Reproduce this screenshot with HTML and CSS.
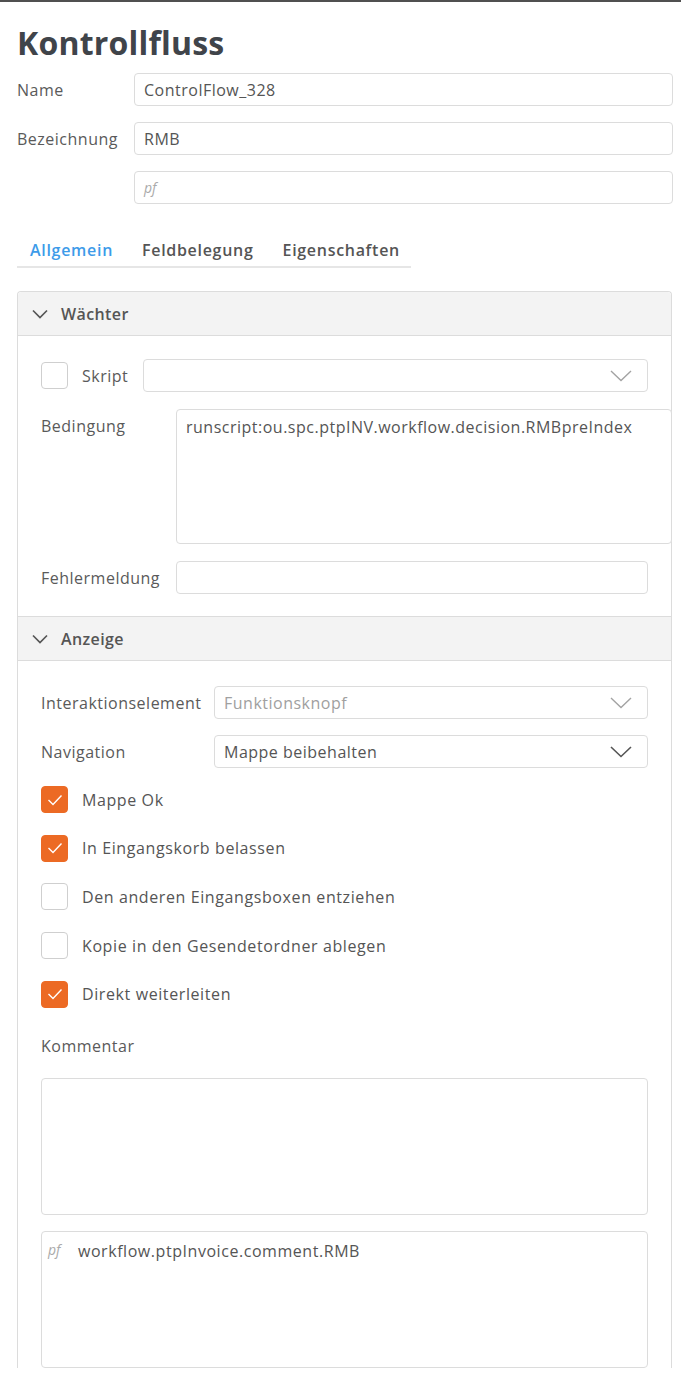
FILE: index.html
```html
<!DOCTYPE html>
<html lang="de">
<head>
<meta charset="utf-8">
<title>Kontrollfluss</title>
<link rel="stylesheet" href="styles.css">
</head>
<body>
<div class="topbar"></div>
<main class="page">
  <h1 class="title">Kontrollfluss</h1>

  <div class="form">
    <div class="form-row">
      <span class="label">Name</span>
      <div class="field">ControlFlow_328</div>
    </div>
    <div class="form-row">
      <span class="label">Bezeichnung</span>
      <div class="field">RMB</div>
    </div>
    <div class="form-row">
      <span class="label"></span>
      <div class="field placeholder">pf</div>
    </div>
  </div>

  <nav class="tabs">
    <span class="tab active">Allgemein</span>
    <span class="tab">Feldbelegung</span>
    <span class="tab">Eigenschaften</span>
  </nav>

  <section class="panel">
    <header class="panel-head">
      <svg class="chev" viewBox="0 0 16 10" width="16" height="10"><path d="M1 1.5 L8 8.5 L15 1.5" fill="none" stroke="#555" stroke-width="1.7"/></svg>
      <span>Wächter</span>
    </header>
    <div class="panel-body guard">
      <div class="row skript-row">
        <span class="cb"></span>
        <span class="label skript-label">Skript</span>
        <div class="field select">
          <span></span>
          <svg class="sel-chev" viewBox="0 0 22 12" width="22" height="12"><path d="M1 1 L11 10.5 L21 1" fill="none" stroke="#a3a3a3" stroke-width="1.4"/></svg>
        </div>
      </div>
      <div class="row grid-a">
        <span class="label top">Bedingung</span>
        <div class="field area wide">runscript:ou.spc.ptpINV.workflow.decision.RMBpreIndex</div>
      </div>
      <div class="row grid-a">
        <span class="label">Fehlermeldung</span>
        <div class="field"></div>
      </div>
    </div>

    <header class="panel-head inner">
      <svg class="chev" viewBox="0 0 16 10" width="16" height="10"><path d="M1 1.5 L8 8.5 L15 1.5" fill="none" stroke="#555" stroke-width="1.7"/></svg>
      <span>Anzeige</span>
    </header>
    <div class="panel-body display">
      <div class="row grid-b">
        <span class="label">Interaktionselement</span>
        <div class="field select disabled">
          <span>Funktionsknopf</span>
          <svg class="sel-chev" viewBox="0 0 22 12" width="22" height="12"><path d="M1 1 L11 10.5 L21 1" fill="none" stroke="#a3a3a3" stroke-width="1.4"/></svg>
        </div>
      </div>
      <div class="row grid-b">
        <span class="label">Navigation</span>
        <div class="field select">
          <span>Mappe beibehalten</span>
          <svg class="sel-chev" viewBox="0 0 22 12" width="22" height="12"><path d="M1 1 L11 10.5 L21 1" fill="none" stroke="#555" stroke-width="1.6"/></svg>
        </div>
      </div>

      <ul class="checks">
        <li><span class="cb on"><svg viewBox="0 0 16 12" width="16" height="12"><path d="M1.5 6 L6 10.5 L14.5 1.5" fill="none" stroke="#fff" stroke-width="1.4"/></svg></span>Mappe Ok</li>
        <li><span class="cb on"><svg viewBox="0 0 16 12" width="16" height="12"><path d="M1.5 6 L6 10.5 L14.5 1.5" fill="none" stroke="#fff" stroke-width="1.4"/></svg></span>In Eingangskorb belassen</li>
        <li><span class="cb"></span>Den anderen Eingangsboxen entziehen</li>
        <li><span class="cb"></span>Kopie in den Gesendetordner ablegen</li>
        <li><span class="cb on"><svg viewBox="0 0 16 12" width="16" height="12"><path d="M1.5 6 L6 10.5 L14.5 1.5" fill="none" stroke="#fff" stroke-width="1.4"/></svg></span>Direkt weiterleiten</li>
      </ul>

      <div class="label comment-label">Kommentar</div>
      <div class="field area comment"></div>
      <div class="field area comment pf-area"><span class="pf">pf</span><span class="pf-text">workflow.ptpInvoice.comment.RMB</span></div>
    </div>
  </section>
</main>
</body>
</html>
```

FILE: styles.css
```css
* { box-sizing: border-box; }

html, body {
  margin: 0;
  padding: 0;
  background: #fff;
}

body {
  font-family: "Open Sans", "Noto Sans", sans-serif;
  font-size: 16px;
  letter-spacing: 0.5px;
  color: #555;
  overflow: hidden;
}

.topbar {
  height: 2px;
  background: #505050;
}

.page {
  padding: 0 8px 0 17px;
}

.title {
  margin: 18px 0 0;
  font-size: 32px;
  line-height: 46px;
  font-weight: 700;
  color: #40444a;
  letter-spacing: 0.2px;
}

.form {
  display: flex;
  flex-direction: column;
  gap: 16px;
  margin-top: 7px;
}

.form-row {
  display: grid;
  grid-template-columns: 117px 1fr;
  align-items: center;
}

.label {
  color: #5a5a5a;
  white-space: nowrap;
}

.field {
  height: 33px;
  border: 1px solid #dcdcdc;
  border-radius: 4px;
  padding: 0 9px;
  display: flex;
  align-items: center;
  color: #555;
  background: #fff;
  white-space: nowrap;
}

.placeholder {
  font-style: italic;
  color: #aaa;
  font-size: 14px;
  letter-spacing: 0;
}

.tabs {
  display: flex;
  width: 394px;
  margin-top: 35px;
  padding: 0 0 0 13px;
  gap: 29px;
  border-bottom: 2px solid #e6e6e6;
  height: 29px;
  align-items: flex-start;
}

.tab {
  font-weight: 600;
  color: #555;
  line-height: 22px;
  letter-spacing: 0.7px;
}

.tab.active {
  color: #3d9be9;
}

.panel {
  margin-top: 23px;
  width: 655px;
  border: 1px solid #dcdcdc;
  border-bottom: none;
  border-radius: 4px 4px 0 0;
}

.panel-head {
  height: 44px;
  background: #f3f3f3;
  border-bottom: 1px solid #dcdcdc;
  display: flex;
  align-items: center;
  gap: 13px;
  padding-left: 14px;
  font-weight: 600;
  color: #555;
  border-radius: 4px 4px 0 0;
  letter-spacing: 0.4px;
}

.panel-head.inner {
  height: 45px;
  border-top: 1px solid #dcdcdc;
  border-radius: 0;
}

.chev { display: block; }

.panel-body {
  padding: 23px 23px 0 23px;
  display: flex;
  flex-direction: column;
}

.guard {
  gap: 17px;
  padding-bottom: 22px;
}

.row { display: grid; }

.skript-row {
  grid-template-columns: 27px 14px 61px 1fr;
  align-items: center;
}

.skript-row .cb { grid-column: 1; }
.skript-row .skript-label { grid-column: 3; }
.skript-row .field { grid-column: 4; }

.grid-a {
  grid-template-columns: 135px 1fr;
  align-items: center;
}

.grid-b {
  grid-template-columns: 173px 1fr;
  align-items: center;
}

.label.top {
  align-self: start;
  padding-top: 6px;
}

.select {
  justify-content: space-between;
  padding-right: 15px;
}

.select.disabled span { color: #a0a0a0; }

.sel-chev { display: block; }

.area {
  align-items: flex-start;
  padding-top: 6px;
}

.wide {
  height: 135px;
  margin-right: -24px;
}

.display {
  padding-top: 25px;
  gap: 0;
}

.display .grid-b + .grid-b { margin-top: 16px; }

.cb {
  width: 27px;
  height: 27px;
  border: 1px solid #cfcfcf;
  border-radius: 4px;
  background: #fff;
  display: flex;
  align-items: center;
  justify-content: center;
  flex: none;
}

.cb.on {
  background: #ec6a24;
  border-color: #ec6a24;
}

.checks {
  list-style: none;
  margin: 18px 0 0;
  padding: 0;
  display: flex;
  flex-direction: column;
  gap: 21.7px;
  letter-spacing: 0.6px;
}

.checks li {
  display: flex;
  align-items: center;
  gap: 14px;
  height: 27px;
}

.comment-label {
  margin-top: 27px;
  line-height: 22px;
}

.comment {
  height: 137px;
  margin-top: 21px;
}

.comment + .comment { margin-top: 16px; }

.pf-area {
  padding-left: 6px;
  padding-top: 8px;
}

.pf {
  font-style: italic;
  color: #aaa;
  font-size: 14px;
  letter-spacing: 0;
  width: 30px;
}

.pf-text {
  font-size: 16px;
  letter-spacing: 0.55px;
  color: #555;
}
```
